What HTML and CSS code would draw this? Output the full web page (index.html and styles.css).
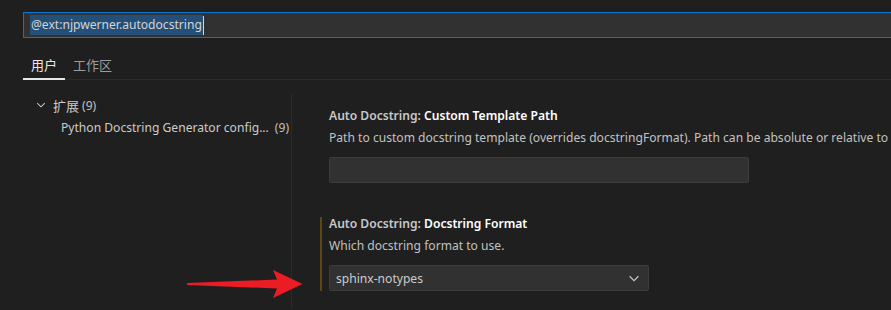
FILE: index.html
```html
<!DOCTYPE html>
<html>
<head>
<meta charset="utf-8">
<title>Settings - Auto Docstring</title>
<link rel="stylesheet" href="styles.css">
</head>
<body>
<div class="settings">
  <div class="search">
    <span class="query">@ext:njpwerner.autodocstring</span><span class="caret"></span>
  </div>

  <div class="tabs">
    <div class="tab active">用户</div>
    <div class="tab">工作区</div>
  </div>

  <div class="body">
    <div class="tree">
      <div class="tree-row group">
        <svg class="chevron" width="12" height="12" viewBox="0 0 16 16"><path d="M3 5.5 L8 10.5 L13 5.5" fill="none" stroke="#c5c5c5" stroke-width="1.4"/></svg>
        <span class="cjk">扩展</span><span class="count">(9)</span>
      </div>
      <div class="tree-row item">
        <span>Python Docstring Generator config...</span><span class="count">(9)</span>
      </div>
    </div>

    <div class="list">
      <div class="setting">
        <div class="setting-title"><span class="category">Auto Docstring: </span><span class="label">Custom Template Path</span></div>
        <div class="setting-desc">Path to custom docstring template (overrides docstringFormat). Path can be absolute or relative to the project root.</div>
        <div class="text-input"></div>
      </div>

      <div class="setting modified">
        <div class="setting-title"><span class="category">Auto Docstring: </span><span class="label">Docstring Format</span></div>
        <div class="setting-desc">Which docstring format to use.</div>
        <div class="select">
          <span>sphinx-notypes</span>
          <svg width="14" height="14" viewBox="0 0 16 16"><path d="M3 6 L8 11 L13 6" fill="none" stroke="#c5c5c5" stroke-width="1.4"/></svg>
        </div>
      </div>
    </div>
  </div>

  <!-- annotation arrow drawn over the screenshot -->
  <svg class="arrow" width="120" height="34" viewBox="185 267 120 34">
    <path d="M187 283 L277 279.5 L273 270 L302.5 284 L273 298 L277 288.5 L187 285 Z" fill="#ec1c24"/>
  </svg>
</div>
</body>
</html>
```

FILE: styles.css
```css
html, body {
  margin: 0;
  height: 100%;
  background-color: #1f1f1f;
  overflow: hidden;
}

.settings {
  position: relative;
  height: 100%;
  box-sizing: border-box;
  font-family: "Noto Sans", "Noto Sans CJK SC", sans-serif;
  font-size: 12.1px;
  color: #cccccc;
  padding-top: 12px;
  overflow: hidden;
}

.cjk {
  font-family: "Noto Sans CJK SC", sans-serif;
  font-size: 13px;
}

.search {
  display: flex;
  align-items: center;
  box-sizing: border-box;
  height: 26px;
  margin-left: 23px;
  padding-left: 6px;
  background-color: #313131;
  border: 1px solid #0078d4;
  border-right: none;
}

.query {
  background-color: #264f78;
  color: #d4d4d4;
  line-height: 20px;
  padding: 0 1px;
}

.caret {
  width: 1px;
  height: 19px;
  background-color: #d4d4d4;
}

.tabs {
  display: flex;
  margin: 14px 0 0 23px;
  border-bottom: 1px solid #2b2b2b;
}

.tab {
  box-sizing: border-box;
  padding: 0 8px;
  height: 28px;
  line-height: 25px;
  color: #9d9d9d;
  font-family: "Noto Sans CJK SC", sans-serif;
  font-size: 13px;
  border-bottom: 2px solid transparent;
  margin-bottom: -1px;
}

.tab.active {
  color: #e7e7e7;
  border-bottom-color: #e7e7e7;
}

.body {
  display: flex;
  margin-top: 14px;
}

.tree {
  flex-shrink: 0;
  width: 291px;
  height: 215px;
  border-right: 1px solid #2b2b2b;
}

.tree-row {
  display: flex;
  align-items: center;
  height: 22px;
  white-space: nowrap;
}

.tree-row.group {
  padding-left: 35px;
}

.tree-row.group .chevron {
  margin-right: 6px;
}

.tree-row.item {
  padding-left: 61px;
}

.count {
  margin-left: 3px;
  color: #c0c0c0;
}

.tree-row.item .count {
  margin-left: 6px;
}

.list {
  flex: 1;
  min-width: 0;
  overflow: hidden;
  padding-left: 28px;
  padding-top: 15px;
}

.setting {
  padding-left: 7px;
  border-left: 2px solid transparent;
  padding-bottom: 34px;
}

.setting.modified {
  border-left-color: #5d4616;
  padding-bottom: 0;
}

.setting-title {
  font-weight: 600;
  line-height: 13px;
  white-space: nowrap;
}

.category {
  color: #c8c8c8;
}

.label {
  color: #ffffff;
}

.setting-desc {
  margin-top: 7px;
  line-height: 17px;
  color: #c2c2c2;
  white-space: nowrap;
}

.text-input {
  box-sizing: border-box;
  margin-top: 11px;
  width: 420px;
  height: 26px;
  background-color: #313131;
  border: 1px solid #3c3c3c;
  border-radius: 2px;
}

.select {
  display: flex;
  align-items: center;
  justify-content: space-between;
  box-sizing: border-box;
  margin-top: 11px;
  width: 320px;
  height: 26px;
  padding: 0 7px 0 6px;
  background-color: #313131;
  border: 1px solid #3c3c3c;
  border-radius: 2px;
  color: #cccccc;
}

.arrow {
  position: absolute;
  left: 185px;
  top: 267px;
}
```
